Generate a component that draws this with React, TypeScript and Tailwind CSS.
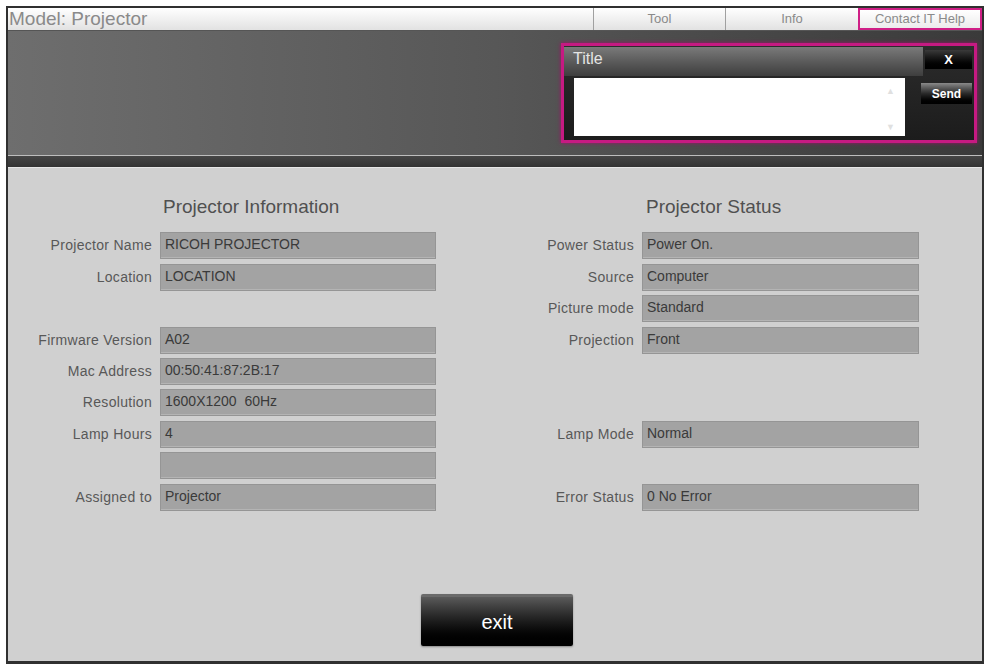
import React from 'react';

const leftRows: (null | { label: string; value: string })[] = [
  { label: 'Projector Name', value: 'RICOH PROJECTOR' },
  { label: 'Location', value: 'LOCATION' },
  null,
  { label: 'Firmware Version', value: 'A02' },
  { label: 'Mac Address', value: '00:50:41:87:2B:17' },
  { label: 'Resolution', value: '1600X1200  60Hz' },
  { label: 'Lamp Hours', value: '4' },
  { label: '', value: '' },
  { label: 'Assigned to', value: 'Projector' },
];

const rightRows: (null | { label: string; value: string })[] = [
  { label: 'Power Status', value: 'Power On.' },
  { label: 'Source', value: 'Computer' },
  { label: 'Picture mode', value: 'Standard' },
  { label: 'Projection', value: 'Front' },
  null,
  null,
  { label: 'Lamp Mode', value: 'Normal' },
  null,
  { label: 'Error Status', value: '0 No Error' },
];

function Cell({ row }: { row: null | { label: string; value: string } }) {
  if (!row) {
    return (
      <>
        <div className="h-[27px]" />
        <div className="h-[27px]" />
      </>
    );
  }
  return (
    <>
      <div className="h-[27px] flex items-center justify-end pr-[8px] text-[14px] tracking-[0.3px] text-[#585858] whitespace-nowrap">
        {row.label}
      </div>
      <div className="h-[27px] bg-[#a3a3a3] border border-[#959595] shadow-[inset_0_-1px_0_#b4b4b4] pl-[4px] pt-[3px] text-[14px] leading-[16px] text-[#3a3a3a] whitespace-pre">
        {row.value}
      </div>
    </>
  );
}

export default function App() {
  return (
    <div
      className="min-h-screen bg-white pt-[6px] pl-[6px]"
      style={{ fontFamily: '"Liberation Sans", Arial, sans-serif' }}
    >
      <div className="w-[978px] h-[658px] border-2 border-b-[3px] border-[#303030] flex flex-col bg-[#d0d0d0]">
        {/* Top bar */}
        <div className="h-[23px] flex bg-gradient-to-b from-white to-[#e2e2e2] border-b border-[#555]">
          <div className="flex-1 pl-[1px] text-[19px] leading-[22px] text-[#8a8a8a]">Model: Projector</div>
          <div className="w-[132px] border-l border-[#a0a0a0] flex items-center justify-center text-[13px] text-[#8a8a8a]">
            Tool
          </div>
          <div className="w-[133px] border-l border-[#a0a0a0] flex items-center justify-center text-[13px] text-[#8a8a8a]">
            Info
          </div>
          <div className="w-[124px] border-2 border-[#cf1f86] bg-gradient-to-b from-white to-[#ececec] flex items-center justify-center text-[13px] text-[#8a8a8a] whitespace-nowrap">
            Contact IT Help
          </div>
        </div>

        {/* Header */}
        <div className="h-[124px] flex justify-end items-start pt-[12px] pr-[5px] bg-gradient-to-r from-[#6e6e6e] via-[#575757] to-[#3a3a3a]">
          <div className="w-[416px] h-[100px] border-[3px] border-[#c61a82] shadow-[0_0_4px_#a0106a] bg-gradient-to-b from-[#2c2c2c] to-[#1c1c1c] flex flex-col">
            <div className="h-[31px] flex items-start pt-[1px]">
              <div className="flex-1 h-[29px] bg-gradient-to-b from-[#7a7a7a] to-[#3e3e3e] pl-[9px] text-[16px] leading-[24px] text-[#e4e4e4]">
                Title
              </div>
              <div className="mt-[3px] mx-[2px] w-[47px] h-[19px] bg-gradient-to-b from-[#3a3a3a] to-black flex items-center justify-center text-[13px] font-bold text-white">
                X
              </div>
            </div>
            <div className="flex items-start pl-[10px] pt-[1px]">
              <div className="relative w-[331px] h-[58px] bg-white">
                <span className="absolute right-[10px] top-[7px] text-[9px] text-[#e0e0e0]">▲</span>
                <span className="absolute right-[10px] bottom-[2px] text-[9px] text-[#e0e0e0]">▼</span>
              </div>
              <div className="ml-[16px] mt-[5px] w-[51px] h-[21px] bg-gradient-to-b from-[#8a8a8a] via-[#2a2a2a] to-black flex items-center justify-center text-[12px] font-bold text-white">
                Send
              </div>
            </div>
          </div>
        </div>

        {/* Separator band */}
        <div className="h-[1px] bg-[#bdbdbd]" />
        <div className="h-[11px] bg-gradient-to-b from-[#454545] to-[#333]" />
        <div className="h-[1px] bg-[#e6e6e6]" />

        {/* Content */}
        <div className="flex-1 flex flex-col">
          <div className="grid grid-cols-[152px_276px_206px_277px] pt-[28px] gap-y-[4.4px]">
            <div />
            <div className="pl-[3px] h-[22px] text-[19px] leading-[22px] text-[#505050] mb-[10px]">Projector Information</div>
            <div />
            <div className="pl-[4px] h-[22px] text-[19px] leading-[22px] text-[#505050] mb-[10px]">Projector Status</div>
            {leftRows.map((row, i) => (
              <React.Fragment key={i}>
                <Cell row={row} />
                <Cell row={rightRows[i]} />
              </React.Fragment>
            ))}
          </div>

          <div className="mt-auto mb-[15px] flex justify-center pl-[4px]">
            <button className="w-[152px] h-[52px] rounded-[2px] border-t-[3px] border-[#6a6a6a] bg-gradient-to-b from-[#5a5a5a] via-[#1c1c1c] to-black text-white text-[20px] shadow-[0_1px_2px_#888]">
              exit
            </button>
          </div>
        </div>
      </div>
    </div>
  );
}
